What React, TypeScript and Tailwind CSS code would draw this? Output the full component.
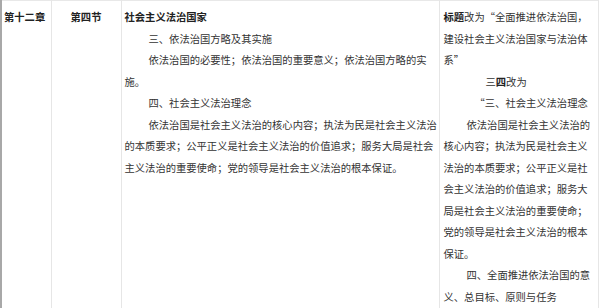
const font = {
  fontFamily: '"Noto Sans CJK SC", "Liberation Sans", sans-serif',
};

const App = () => {
  return (
    <div className="w-[600px] h-[308px] overflow-hidden bg-white" style={font}>
      <table className="w-[597px] border-collapse table-fixed text-[10.3px] leading-[21.5px] text-[#333]">
        <colgroup>
          <col className="w-[50px]" />
          <col className="w-[70px]" />
          <col className="w-[318px]" />
          <col className="w-[159px]" />
        </colgroup>
        <tbody>
          <tr className="align-top">
            <td className="border-l-2 border-l-[#a8a8a8] border-t border-t-[#e8e8e8] border-r border-r-[#e6e6e6] pl-[2px] pt-[5px] h-[330px] font-bold text-[#222]">
              第十二章
            </td>
            <td className="border-t border-t-[#e8e8e8] border-r border-r-[#e6e6e6] pt-[5px] text-center font-bold text-[#222]">
              第四节
            </td>
            <td className="border-t border-t-[#e8e8e8] border-r border-r-[#e6e6e6] pt-[5px] pl-[3px] pr-0">
              <p className="font-bold text-[#222]">社会主义法治国家</p>
              <p className="indent-[24px]">三、依法治国方略及其实施</p>
              <p className="indent-[24px]">
                依法治国的必要性；依法治国的重要意义；依法治国方略的实施。
              </p>
              <p className="indent-[24px]">四、社会主义法治理念</p>
              <p className="indent-[24px]">
                依法治国是社会主义法治的核心内容；执法为民是社会主义法治的本质要求；公平正义是社会主义法治的价值追求；服务大局是社会主义法治的重要使命；党的领导是社会主义法治的根本保证。
              </p>
            </td>
            <td className="border-t border-t-[#e8e8e8] border-r border-r-[#e6e6e6] pt-[5px] pl-[4px] pr-[3px]">
              <p>
                <span className="font-bold text-[#222]">标题</span>
                改为“全面推进依法治国，建设社会主义法治国家与法治体系”
              </p>
              <p className="pl-[42px]">
                三<span className="font-bold text-[#222]">四</span>改为
              </p>
              <p className="pl-[31px]">“三、社会主义法治理念</p>
              <p className="indent-[23px]">
                依法治国是社会主义法治的核心内容；执法为民是社会主义法治的本质要求；公平正义是社会主义法治的价值追求；服务大局是社会主义法治的重要使命；党的领导是社会主义法治的根本保证。
              </p>
              <p className="indent-[23px]">四、全面推进依法治国的意义、总目标、原则与任务</p>
            </td>
          </tr>
        </tbody>
      </table>
    </div>
  );
};

export default App;
